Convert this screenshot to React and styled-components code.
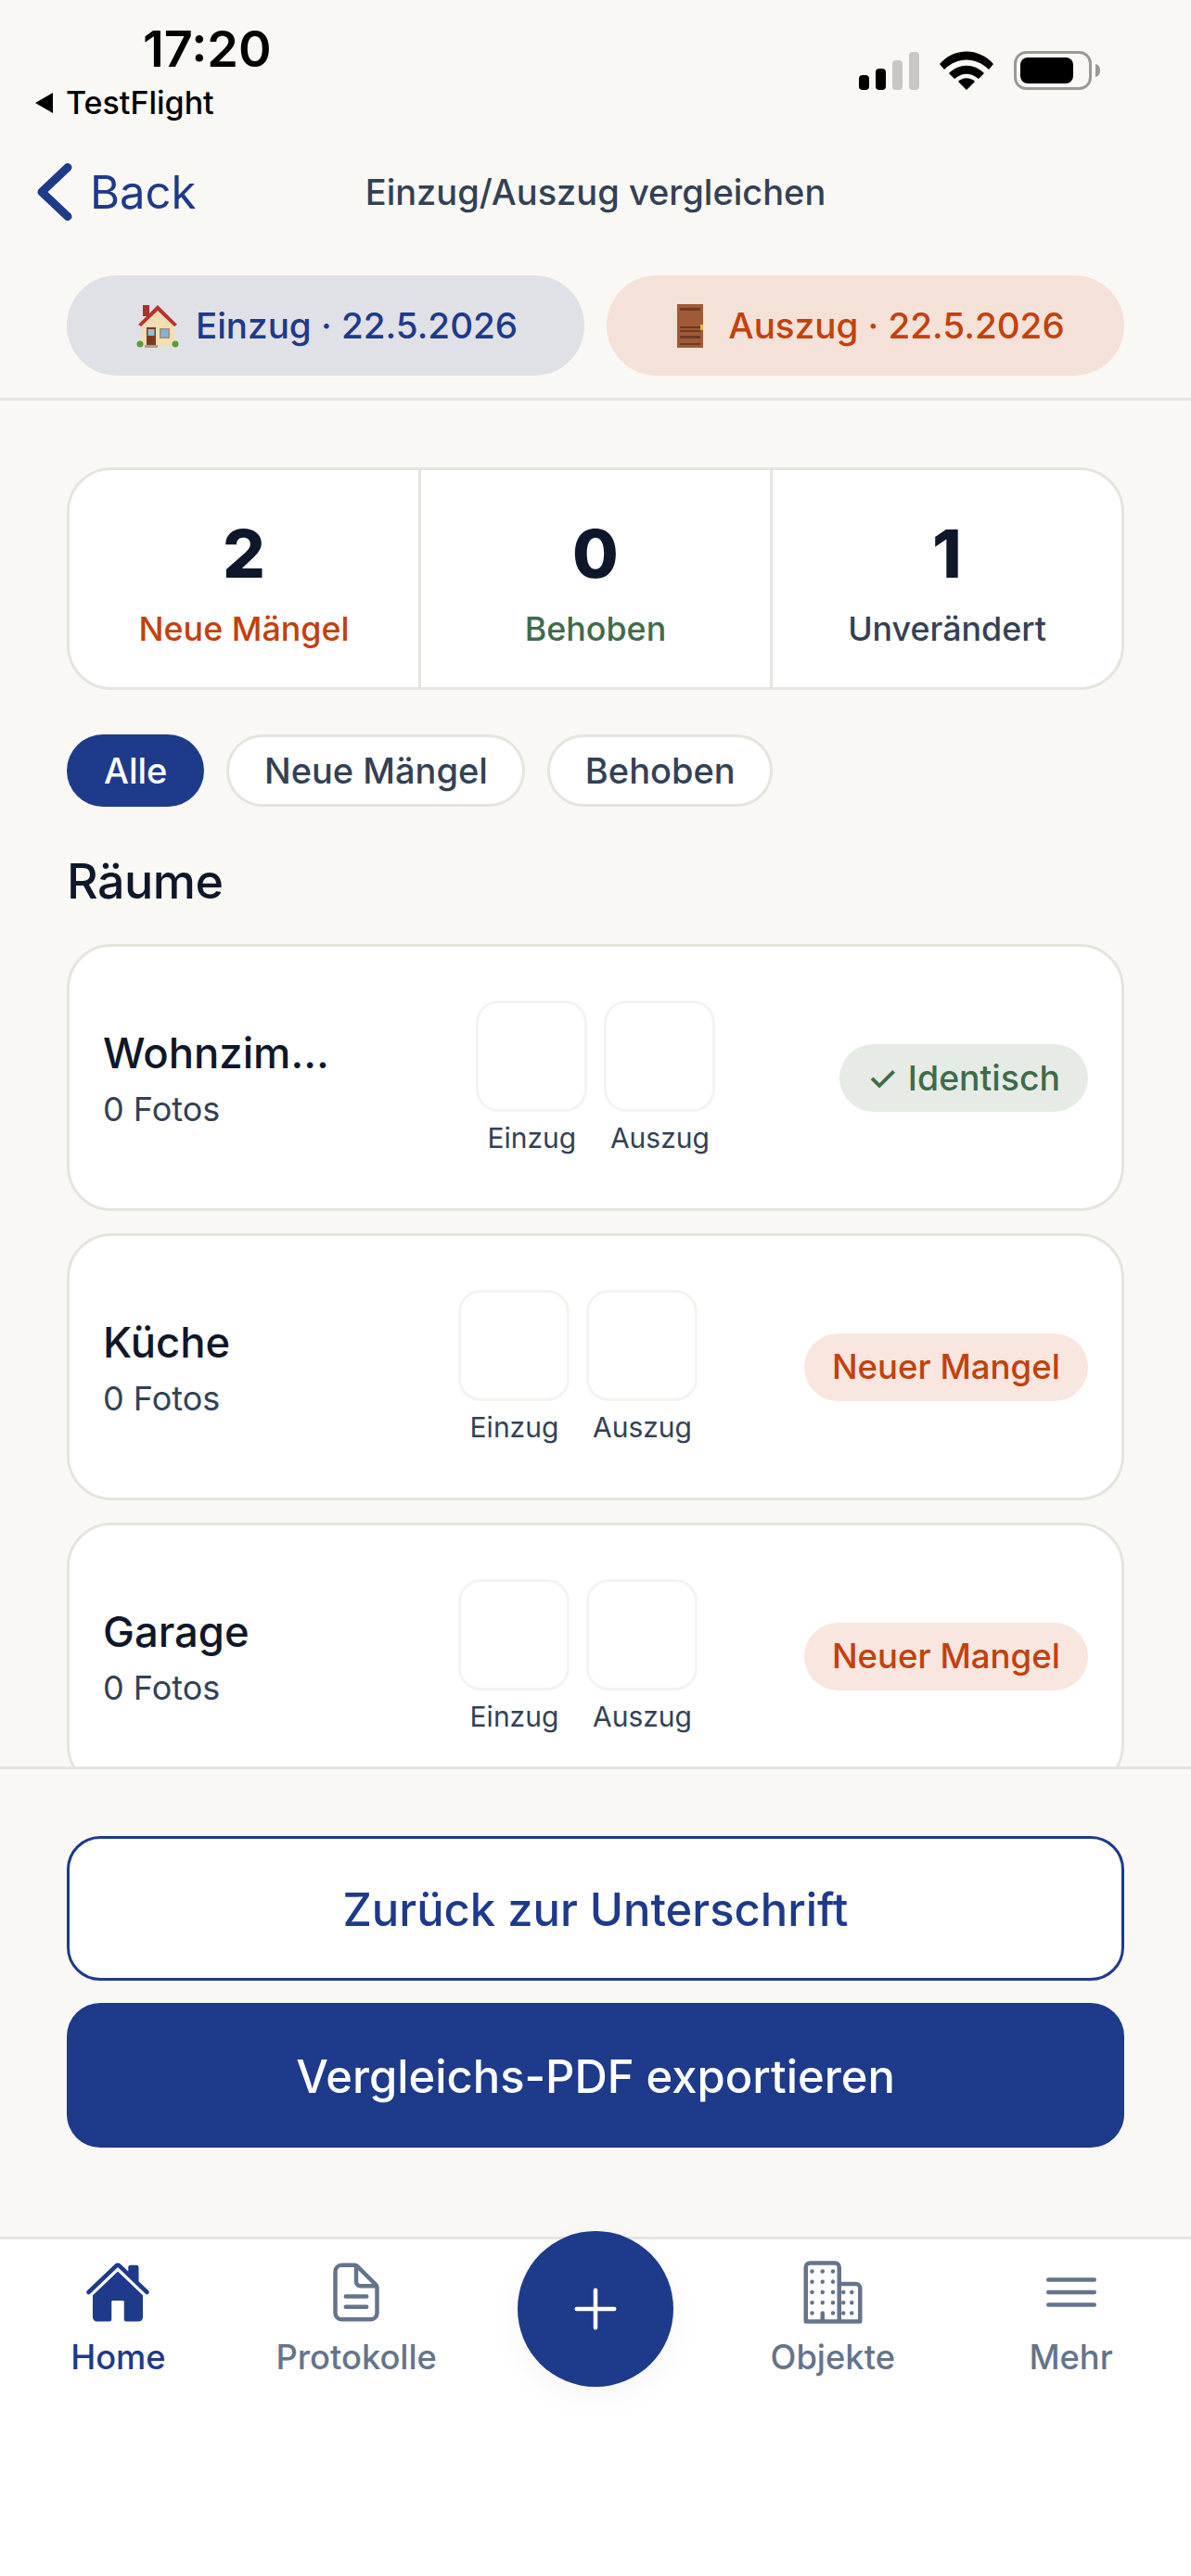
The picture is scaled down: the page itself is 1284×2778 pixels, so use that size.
import React from 'react';
import styled, { createGlobalStyle } from 'styled-components';
import { IoHome, IoDocumentTextOutline, IoBusinessOutline, IoMenuOutline, IoAdd } from 'react-icons/io5';

const Global = createGlobalStyle`
  html, body { margin: 0; padding: 0; background: #F9F8F4; }
  * { box-sizing: border-box; }
  body { font-family: Inter, "Liberation Sans", sans-serif; }
`;

const Screen = styled.div`
  width: 1284px;
  height: 2778px;
  display: flex;
  flex-direction: column;
  background: #F9F8F4;
  overflow: hidden;
`;

const StatusBar = styled.div`
  height: 160px;
  padding: 20px 98px 0 36px;
  display: flex;
  justify-content: space-between;
  align-items: flex-start;
  color: #000;
`;
const StatusLeft = styled.div`
  display: flex;
  flex-direction: column;
`;
const Time = styled.div`
  margin-left: 118px;
  font-size: 54px;
  line-height: 66px;
  font-weight: 600;
`;
const BackApp = styled.div`
  display: flex;
  align-items: center;
  gap: 13px;
  margin-top: 5px;
  font-size: 34px;
  line-height: 40px;
  font-weight: 500;
`;
const StatusIcons = styled.div`
  display: flex;
  align-items: center;
  gap: 22px;
  margin-top: 35px;
`;

const Nav = styled.div`
  height: 94px;
  display: grid;
  grid-template-columns: 1fr auto 1fr;
  align-items: center;
  padding: 0 40px;
`;
const BackLink = styled.div`
  display: flex;
  align-items: center;
  gap: 19px;
  color: #1E3A8A;
  font-size: 49px;
`;
const NavTitle = styled.div`
  font-size: 38px;
  font-weight: 500;
  color: #334155;
`;

const PillRow = styled.div`
  padding: 43px 72px 24px;
  display: flex;
  gap: 24px;
  border-bottom: 3px solid #E5E4DF;
`;
const DatePill = styled.div`
  flex: 1;
  height: 108px;
  padding-left: 3px;
  border-radius: 54px;
  display: flex;
  align-items: center;
  justify-content: center;
  gap: 18px;
  font-size: 38.6px;
  font-weight: 500;
  color: ${p => (p.$out ? '#C2410C' : '#1E3A8A')};
  background: ${p => (p.$out ? '#F4E1D8' : '#E0E1E7')};
`;

const Scroll = styled.div`
  height: 1473px;
  padding: 72px 72px 0;
  overflow: hidden;
`;
const Stats = styled.div`
  height: 240px;
  display: flex;
  background: #fff;
  border: 3px solid #E5E4DF;
  border-radius: 48px;
`;
const Stat = styled.div`
  flex: 1;
  display: flex;
  flex-direction: column;
  align-items: center;
  padding-top: 45px;
  & + & { border-left: 3px solid #E5E4DF; }
`;
const StatValue = styled.div`
  font-size: 72px;
  line-height: 90px;
  font-weight: 800;
  color: #0F172A;
`;
const StatLabel = styled.div`
  margin-top: 13px;
  font-size: 35.8px;
  line-height: 46px;
  font-weight: 500;
  color: ${p => p.$color};
`;

const Chips = styled.div`
  margin-top: 48px;
  display: flex;
  gap: 24px;
`;
const Chip = styled.div`
  height: 78px;
  padding: 0 ${p => (p.$active ? '40px' : '37.5px')};
  border-radius: 39px;
  display: flex;
  align-items: center;
  font-size: 38px;
  font-weight: 500;
  color: ${p => (p.$active ? '#fff' : '#334155')};
  background: ${p => (p.$active ? '#1E3A8A' : '#fff')};
  border: ${p => (p.$active ? 'none' : '3px solid #E5E4DF')};
`;

const SectionTitle = styled.div`
  margin-top: 50px;
  margin-bottom: 36px;
  font-size: 52px;
  line-height: 62px;
  font-weight: 500;
  letter-spacing: -0.5px;
  color: #0F172A;
`;

const Card = styled.div`
  height: 288px;
  margin-bottom: 24px;
  padding: 0 36px;
  display: flex;
  align-items: center;
  justify-content: space-between;
  background: #fff;
  border: 3px solid #E5E4DF;
  border-radius: 48px;
`;
const RoomInfo = styled.div`
  width: 269px;
`;
const RoomName = styled.div`
  font-size: 45.4px;
  line-height: 60px;
  font-weight: 500;
  color: #0F172A;
`;
const RoomMeta = styled.div`
  margin-top: 8px;
  font-size: 36px;
  line-height: 44px;
  color: #334155;
`;
const Thumbs = styled.div`
  display: flex;
  gap: 18px;
`;
const Thumb = styled.div`
  width: 120px;
  display: flex;
  flex-direction: column;
  align-items: center;
  gap: 10px;
`;
const ThumbBox = styled.div`
  width: 120px;
  height: 120px;
  border: 3px solid #F4F3EF;
  border-radius: 24px;
  background: #fff;
`;
const ThumbLabel = styled.div`
  font-size: 30px;
  line-height: 36px;
  color: #334155;
`;
const Badge = styled.div`
  height: 73px;
  padding: 0 30px;
  border-radius: 37px;
  display: flex;
  align-items: center;
  gap: 11px;
  font-size: ${p => (p.$same ? '37.4px' : '36.6px')};
  font-weight: 500;
  color: ${p => (p.$same ? '#3F6B4A' : '#C2410C')};
  background: ${p => (p.$same ? '#E7EBE6' : '#F8E6DF')};
`;

const Footer = styled.div`
  height: 507px;
  padding: 72px 72px 0;
  border-top: 3px solid #E5E4DF;
  display: flex;
  flex-direction: column;
  gap: 24px;
`;
const ActionButton = styled.div`
  height: 156px;
  border-radius: 36px;
  display: flex;
  align-items: center;
  justify-content: center;
  padding-top: 2px;
  font-size: 48.9px;
  font-weight: 500;
  color: ${p => (p.$primary ? '#fff' : '#1E3A8A')};
  background: ${p => (p.$primary ? '#1E3A8A' : '#fff')};
  border: ${p => (p.$primary ? 'none' : '3px solid #1E3A8A')};
`;

const TabBar = styled.div`
  position: relative;
  flex: 1;
  display: grid;
  grid-template-columns: repeat(5, 1fr);
  align-items: start;
  padding-top: 21px;
  background: #fff;
  border-top: 3px solid #E5E4DF;
`;
const Tab = styled.div`
  display: flex;
  flex-direction: column;
  align-items: center;
  gap: 12px;
  padding-right: 2px;
  font-size: 36.3px;
  line-height: 44px;
  font-weight: 500;
  color: ${p => (p.$active ? '#1E3A8A' : '#64748B')};
`;
const Fab = styled.div`
  position: absolute;
  left: 558px;
  top: -9px;
  width: 168px;
  height: 168px;
  border-radius: 50%;
  display: flex;
  align-items: center;
  justify-content: center;
  color: #fff;
  background: #1E3A8A;
  box-shadow: 0 12px 36px rgba(15, 23, 42, 0.04);
`;

function HouseEmoji() {
  return (
    <svg width="46" height="47" viewBox="0 0 46 47">
      <rect x="7" y="1" width="7" height="12" fill="#A5352B" />
      <path d="M23 5 L41 23 V45 H5 V23 Z" fill="#F3DDB3" />
      <path d="M2 22 L23 1 L44 22 L41 24 L23 7 L5 24 Z" fill="#B8322A" />
      <rect x="11" y="25" width="10" height="19" fill="#7A3A22" />
      <rect x="12.5" y="27" width="7" height="7" fill="#8CC0DE" />
      <rect x="25" y="26" width="11" height="11" fill="#A88A6A" />
      <rect x="26.5" y="27.5" width="8" height="8" fill="#7FB4DA" />
      <circle cx="4" cy="43" r="3.5" fill="#5F9B3A" />
      <circle cx="42" cy="43" r="3.5" fill="#5F9B3A" />
      <rect x="9" y="44" width="14" height="3" fill="#A89F94" />
    </svg>
  );
}

function DoorEmoji() {
  return (
    <svg width="46" height="47" viewBox="0 0 46 47">
      <rect x="9" width="28" height="47" fill="#A05A36" />
      <rect x="12" y="4" width="22" height="3" fill="#6E3A22" />
      <rect x="12" y="24" width="22" height="2" fill="#6E3A22" />
      <rect x="12" y="28" width="22" height="2" fill="#6E3A22" />
      <rect x="12" y="34" width="22" height="3" fill="#6E3A22" />
      <rect x="12" y="42" width="22" height="2" fill="#6E3A22" />
      <rect x="34" y="22" width="3" height="6" fill="#E0B93C" />
    </svg>
  );
}

function SignalIcon() {
  return (
    <svg width="65" height="41" viewBox="0 0 65 41">
      <rect x="0" y="25" width="11" height="16" rx="4" fill="#000" />
      <rect x="18" y="18" width="11" height="23" rx="4" fill="#000" />
      <rect x="36" y="9" width="11" height="32" rx="4" fill="#C8C7C3" />
      <rect x="54" y="0" width="11" height="41" rx="4" fill="#C8C7C3" />
    </svg>
  );
}

function WifiIcon() {
  return (
    <svg width="58" height="42" viewBox="0 0 58 42">
      <path d="M0 14 C16 -4 42 -4 58 14 L53 20 C39 6 19 6 5 20 Z" fill="#000" />
      <path d="M10 24 C21 13 37 13 48 24 L42 30 C33 23 25 23 16 30 Z" fill="#000" />
      <path d="M20 33 C25 28 33 28 38 33 L29 42 Z" fill="#000" />
    </svg>
  );
}

function BatteryIcon() {
  return (
    <svg width="93" height="42" viewBox="0 0 93 42">
      <rect x="1.5" y="1.5" width="81" height="39" rx="12" fill="none" stroke="#9A9996" strokeWidth="3" />
      <rect x="7" y="7" width="57" height="28" rx="8" fill="#000" />
      <path d="M88 14 C92 15 93 18 93 21 C93 24 92 27 88 28 Z" fill="#9A9996" />
    </svg>
  );
}

function BackChevron() {
  return (
    <svg width="38" height="62" viewBox="0 0 38 62">
      <polyline points="33,4.5 5,31 33,57.5" fill="none" stroke="#1E3A8A" strokeWidth="9" strokeLinecap="round" strokeLinejoin="round" />
    </svg>
  );
}

function RoomCard({ name, same }) {
  return (
    <Card>
      <RoomInfo>
        <RoomName>{name}</RoomName>
        <RoomMeta>0 Fotos</RoomMeta>
      </RoomInfo>
      <Thumbs>
        <Thumb>
          <ThumbBox />
          <ThumbLabel>Einzug</ThumbLabel>
        </Thumb>
        <Thumb>
          <ThumbBox />
          <ThumbLabel>Auszug</ThumbLabel>
        </Thumb>
      </Thumbs>
      {same ? (
        <Badge $same>
          <span>✓</span>
          <span>Identisch</span>
        </Badge>
      ) : (
        <Badge>Neuer Mangel</Badge>
      )}
    </Card>
  );
}

export default function App() {
  return (
    <Screen>
      <Global />
      <StatusBar>
        <StatusLeft>
          <Time>17:20</Time>
          <BackApp>
            <svg width="22" height="24" viewBox="0 0 22 24"><path d="M21 1 V23 L2 12 Z" fill="#000" /></svg>
            TestFlight
          </BackApp>
        </StatusLeft>
        <StatusIcons>
          <SignalIcon />
          <WifiIcon />
          <BatteryIcon />
        </StatusIcons>
      </StatusBar>

      <Nav>
        <BackLink>
          <BackChevron />
          Back
        </BackLink>
        <NavTitle>Einzug/Auszug vergleichen</NavTitle>
      </Nav>

      <PillRow>
        <DatePill>
          <HouseEmoji />
          Einzug · 22.5.2026
        </DatePill>
        <DatePill $out>
          <DoorEmoji />
          Auszug · 22.5.2026
        </DatePill>
      </PillRow>

      <Scroll>
        <Stats>
          <Stat>
            <StatValue>2</StatValue>
            <StatLabel $color="#C2410C">Neue Mängel</StatLabel>
          </Stat>
          <Stat>
            <StatValue>0</StatValue>
            <StatLabel $color="#3F6B4A">Behoben</StatLabel>
          </Stat>
          <Stat>
            <StatValue>1</StatValue>
            <StatLabel $color="#334155">Unverändert</StatLabel>
          </Stat>
        </Stats>

        <Chips>
          <Chip $active>Alle</Chip>
          <Chip>Neue Mängel</Chip>
          <Chip>Behoben</Chip>
        </Chips>

        <SectionTitle>Räume</SectionTitle>

        <RoomCard name="Wohnzim…" same />
        <RoomCard name="Küche" />
        <RoomCard name="Garage" />
      </Scroll>

      <Footer>
        <ActionButton>Zurück zur Unterschrift</ActionButton>
        <ActionButton $primary>Vergleichs-PDF exportieren</ActionButton>
      </Footer>

      <TabBar>
        <Tab $active>
          <IoHome size={72} />
          Home
        </Tab>
        <Tab>
          <IoDocumentTextOutline size={72} />
          Protokolle
        </Tab>
        <div />
        <Tab>
          <IoBusinessOutline size={72} />
          Objekte
        </Tab>
        <Tab>
          <IoMenuOutline size={72} />
          Mehr
        </Tab>
        <Fab>
          <IoAdd size={72} />
        </Fab>
      </TabBar>
    </Screen>
  );
}
